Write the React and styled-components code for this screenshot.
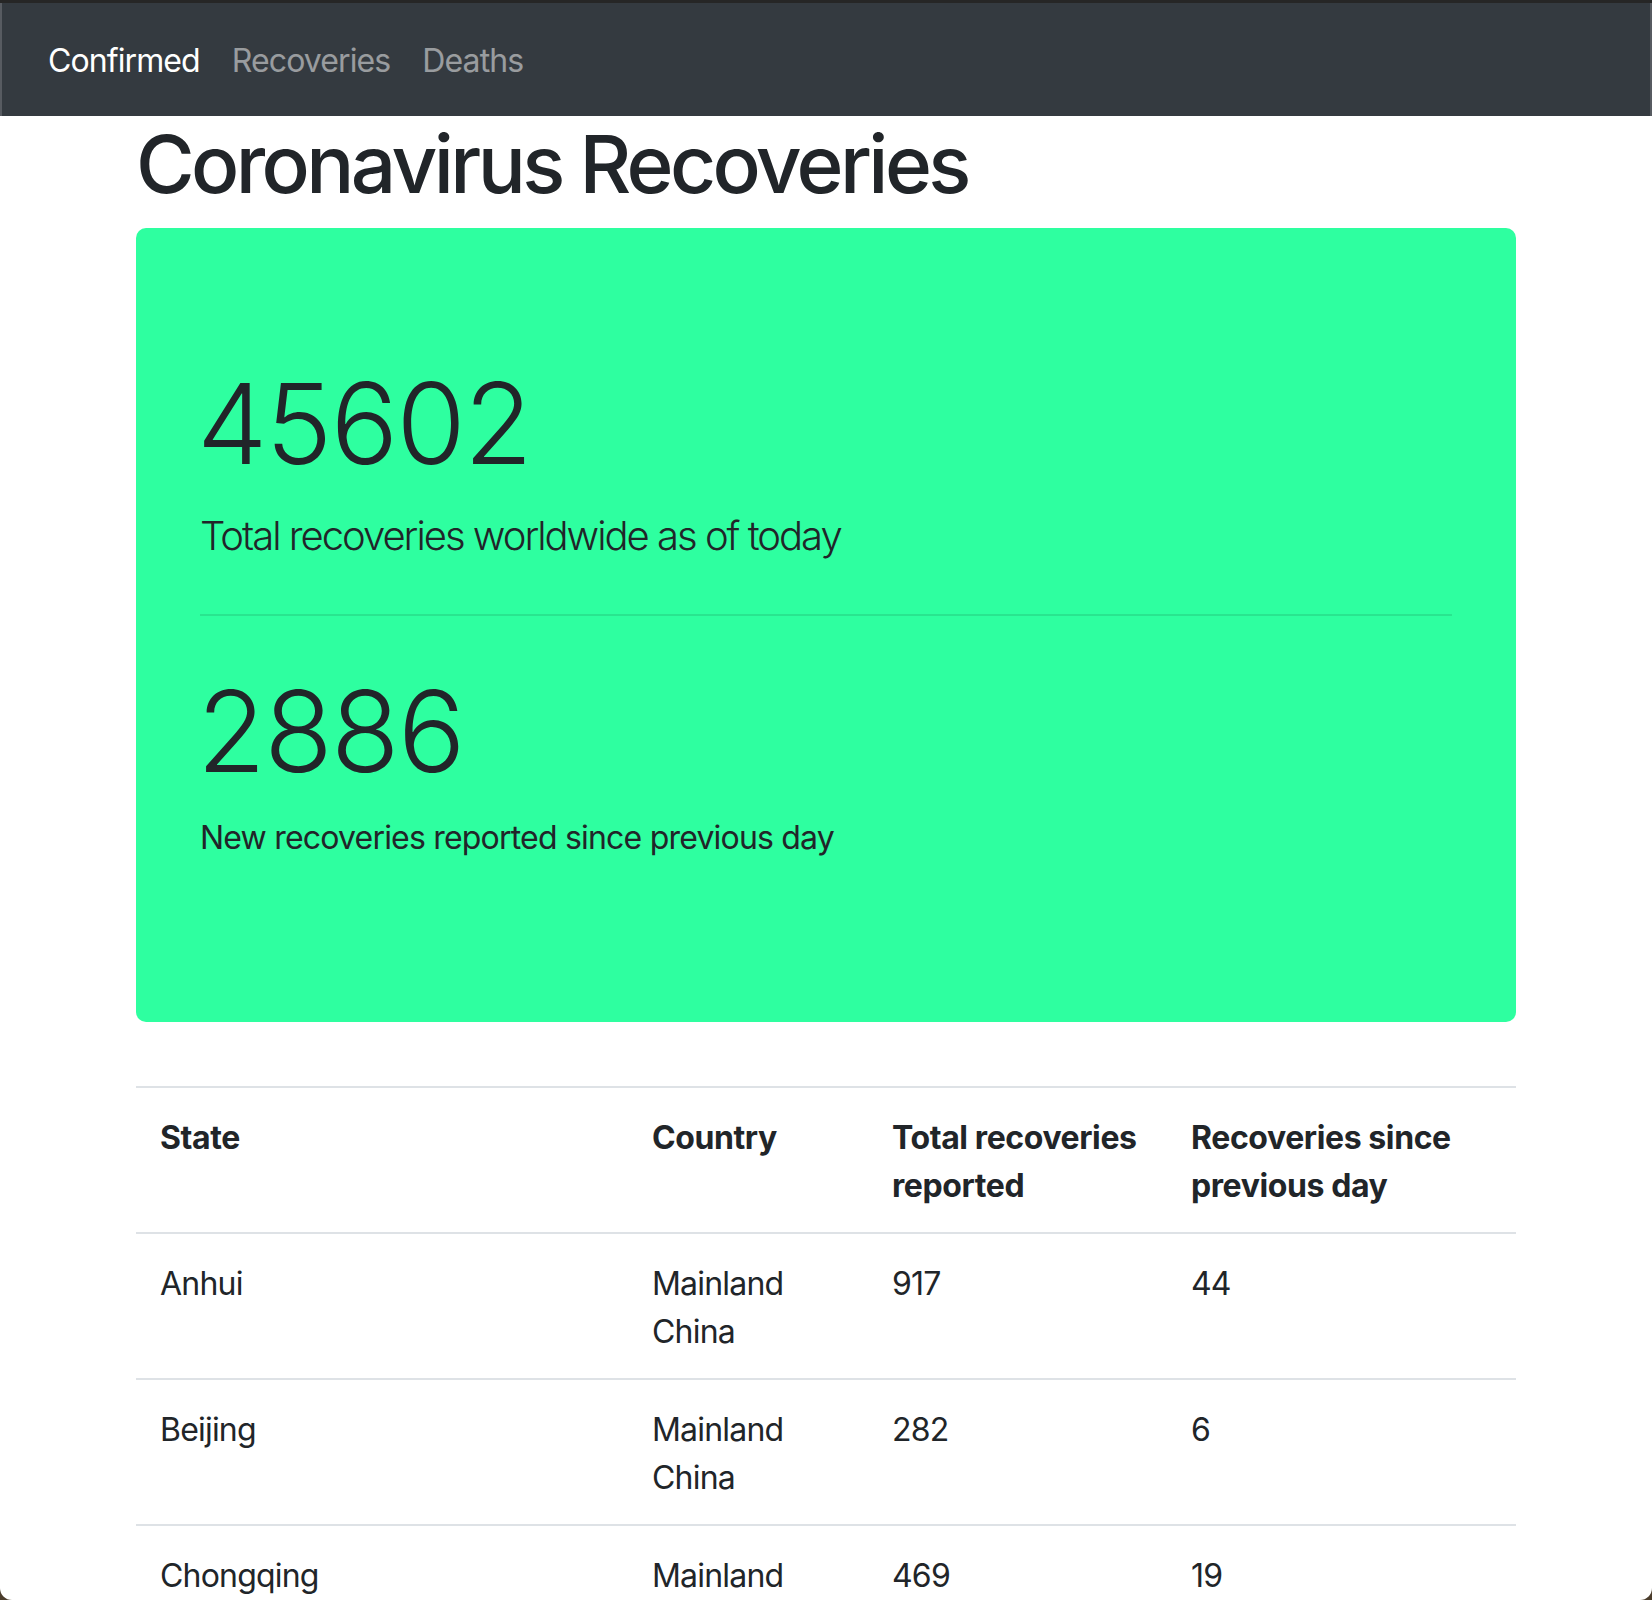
import React from "react";
import styled, { createGlobalStyle } from "styled-components";

const GlobalStyle = createGlobalStyle`
  html {
    background: #4b3d2c;
  }
  body {
    margin: 0;
    font-family: Inter, "Noto Sans", "Liberation Sans", sans-serif;
    color: #212529;
  }
`;

const Frame = styled.div`
  height: 1600px;
  overflow: hidden;
  background: #fff;
  border-radius: 0 0 12px 12px;
`;

const NavBar = styled.nav`
  display: flex;
  align-items: center;
  box-sizing: border-box;
  height: 116px;
  padding: 3px 32px 0;
  background: #343a40;
  border-top: 3px solid #262626;
  box-shadow: inset 2px 0 0 #575b61, inset -2px 0 0 #575b61;
`;

const NavLink = styled.a`
  padding: 16px;
  font-size: 32px;
  line-height: 48px;
  letter-spacing: -0.9px;
  color: ${(p) => (p.$active ? "#fff" : "rgba(255, 255, 255, 0.5)")};
  text-decoration: none;
  cursor: pointer;
`;

const Container = styled.div`
  width: 1380px;
  margin: 0 auto;
`;

const Title = styled.h1`
  margin: 0 0 16px;
  font-size: 80px;
  line-height: 96px;
  font-weight: 500;
  letter-spacing: -3.6px;
`;

const Jumbotron = styled.div`
  padding: 128px 64px;
  margin-bottom: 64px;
  background: #2effa0;
  border-radius: 10px;
`;

const BigNumber = styled.h2`
  margin: 0 0 16px -3px;
  font-size: 112px;
  line-height: 134px;
  font-weight: 300;
  letter-spacing: -1.6px;
`;

const Lead = styled.p`
  margin: 0 0 32px;
  font-size: 40px;
  line-height: 60px;
  font-weight: 300;
  letter-spacing: -2px;
`;

const Text = styled.p`
  margin: 0 0 32px;
  font-size: 32px;
  line-height: 48px;
  letter-spacing: -0.8px;
`;

const Rule = styled.hr`
  margin: 48px 0;
  border: 0;
  border-top: 2px solid rgba(0, 0, 0, 0.1);
`;

const Table = styled.table`
  width: 100%;
  table-layout: fixed;
  border-collapse: collapse;
  font-size: 32px;
  line-height: 48px;
`;

const Cell = styled.td`
  padding: 26px 24px 22px;
  border-top: 2px solid #dee2e6;
  text-align: left;
  vertical-align: top;
  letter-spacing: -0.8px;
`;

const HeadCell = styled(Cell).attrs({ as: "th" })`
  font-weight: 700;
  white-space: nowrap;
  letter-spacing: -0.4px;
`;

const rows = [
  { state: "Anhui", country: "Mainland China", total: 917, change: 44 },
  { state: "Beijing", country: "Mainland China", total: 282, change: 6 },
  { state: "Chongqing", country: "Mainland China", total: 469, change: 19 },
];

export default function App() {
  return (
    <Frame>
      <GlobalStyle />
      <NavBar>
        <NavLink $active>Confirmed</NavLink>
        <NavLink>Recoveries</NavLink>
        <NavLink>Deaths</NavLink>
      </NavBar>
      <Container>
        <Title>Coronavirus Recoveries</Title>
        <Jumbotron>
          <BigNumber>45602</BigNumber>
          <Lead>Total recoveries worldwide as of today</Lead>
          <Rule />
          <BigNumber>2886</BigNumber>
          <Text>New recoveries reported since previous day</Text>
        </Jumbotron>
        <Table>
          <colgroup>
            <col style={{ width: 492 }} />
            <col style={{ width: 240 }} />
            <col style={{ width: 299 }} />
            <col style={{ width: 349 }} />
          </colgroup>
          <thead>
            <tr>
              <HeadCell>State</HeadCell>
              <HeadCell>Country</HeadCell>
              <HeadCell>
                Total recoveries
                <br />
                reported
              </HeadCell>
              <HeadCell>
                Recoveries since
                <br />
                previous day
              </HeadCell>
            </tr>
          </thead>
          <tbody>
            {rows.map((row) => (
              <tr key={row.state}>
                <Cell>{row.state}</Cell>
                <Cell>{row.country}</Cell>
                <Cell>{row.total}</Cell>
                <Cell>{row.change}</Cell>
              </tr>
            ))}
          </tbody>
        </Table>
      </Container>
    </Frame>
  );
}
